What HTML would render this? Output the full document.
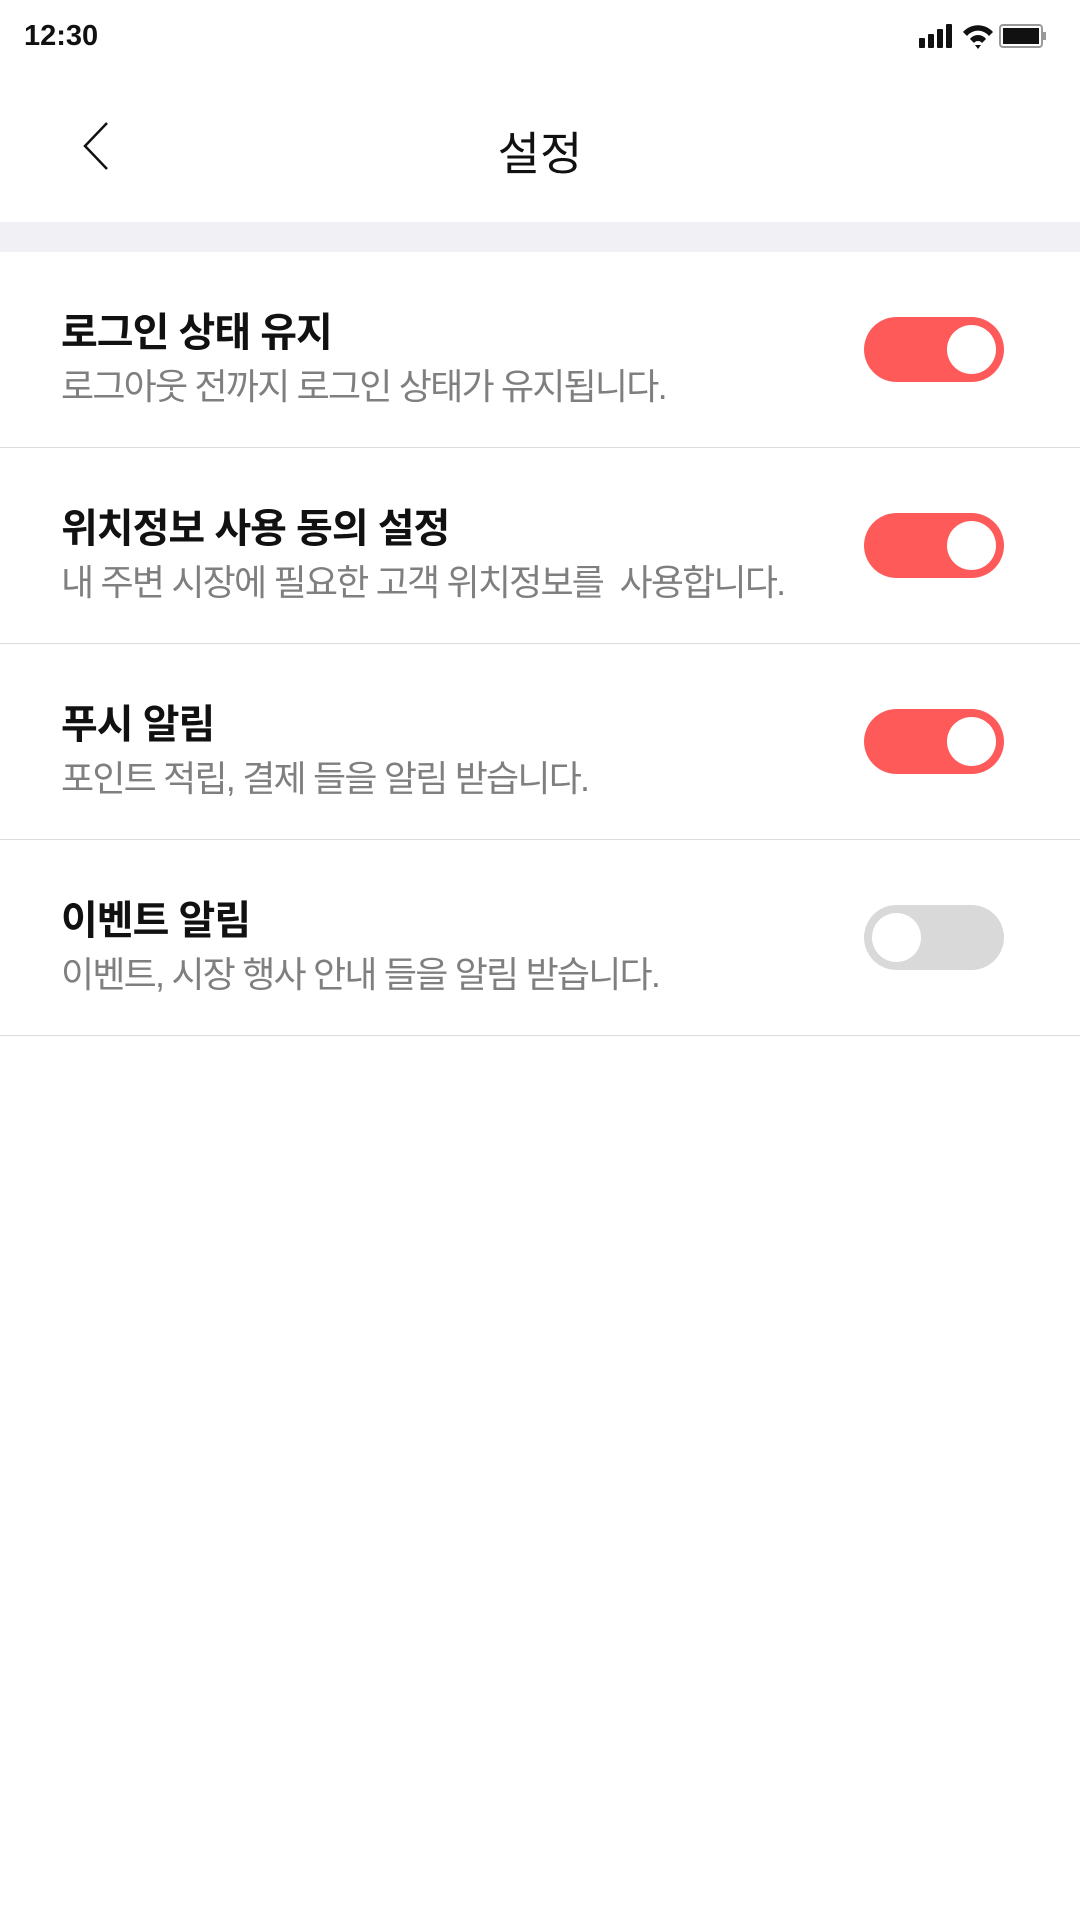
<!DOCTYPE html>
<html><head><meta charset="utf-8"><style>
*{margin:0;padding:0;box-sizing:border-box}
body{width:1080px;height:1920px;background:#fff;position:relative;overflow:hidden;font-family:"Liberation Sans","Noto Sans CJK KR",sans-serif}
.time{position:absolute;left:24px;top:20px;font-size:29px;font-weight:bold;color:#111}
.title{position:absolute;left:0;width:1080px;top:118px;text-align:center;font-size:46px;color:#111}
.band{position:absolute;left:0;top:222px;width:1080px;height:30px;background:#f0f0f5}
.row{position:absolute;left:0;width:1080px;height:196px;border-bottom:1.5px solid #dcdcdc}
.row h3{position:absolute;left:61px;top:48px;font-size:40px;font-weight:bold;color:#111;letter-spacing:-1px}
.row p{position:absolute;left:61px;top:106px;font-size:36px;color:#7f7f7f;letter-spacing:-1.8px}
.tg{position:absolute;left:864px;top:65px;width:140px;height:65px;border-radius:33px;background:#ff5a5a}
.tg i{position:absolute;top:8px;right:8px;width:49px;height:49px;border-radius:50%;background:#fff}
.tg.off{background:#d9d9d9}
.tg.off i{right:auto;left:8px}
</style></head><body>
<div class="time">12:30</div>
<svg style="position:absolute;left:918px;top:22px" width="130" height="28" viewBox="0 0 130 28">
<rect x="1" y="16" width="6" height="10" rx="1" fill="#111"/><rect x="10" y="12" width="6" height="14" rx="1" fill="#111"/><rect x="19" y="7" width="6" height="19" rx="1" fill="#111"/><rect x="28" y="2" width="6" height="24" rx="1" fill="#111"/>
<path d="M45 10 A20 20 0 0 1 75 10 L71 14 A14 14 0 0 0 49 14Z M52 17 A10 10 0 0 1 68 17 L64 21 A5 5 0 0 0 56 21Z M57 23 L60 27 L63 23Z" fill="#111"/>
<rect x="82" y="3" width="42" height="22" rx="3" fill="none" stroke="#999" stroke-width="2"/><rect x="85" y="6" width="36" height="16" fill="#111"/><rect x="125" y="10" width="3" height="8" fill="#999"/>
</svg>
<svg style="position:absolute;left:80px;top:120px" width="34" height="52" viewBox="0 0 34 52"><path d="M27 3 L5 26 L27 49" fill="none" stroke="#111" stroke-width="2.5"/></svg>
<div class="title">설정</div>
<div class="band"></div>
<div class="row" style="top:252px"><h3>로그인 상태 유지</h3><p>로그아웃 전까지 로그인 상태가 유지됩니다.</p><div class="tg"><i></i></div></div>
<div class="row" style="top:448px"><h3>위치정보 사용 동의 설정</h3><p>내 주변 시장에 필요한 고객 위치정보를&nbsp; 사용합니다.</p><div class="tg"><i></i></div></div>
<div class="row" style="top:644px"><h3>푸시 알림</h3><p>포인트 적립, 결제 들을 알림 받습니다.</p><div class="tg"><i></i></div></div>
<div class="row" style="top:840px"><h3>이벤트 알림</h3><p>이벤트, 시장 행사 안내 들을 알림 받습니다.</p><div class="tg off"><i></i></div></div>
</body></html>
